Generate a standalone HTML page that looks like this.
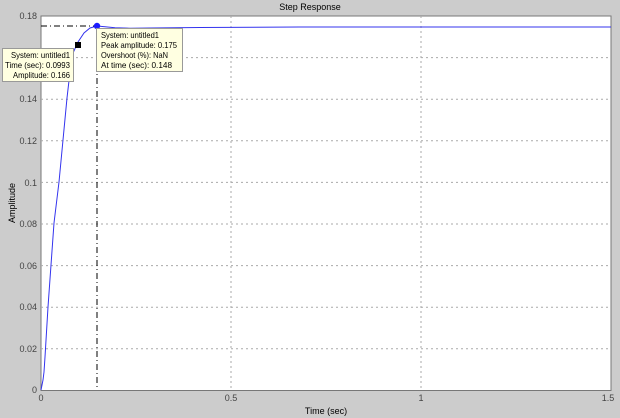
<!DOCTYPE html>
<html><head><style>
html,body{margin:0;padding:0;background:#cccccc;}
svg{display:block;font-family:"Liberation Sans",Arial,sans-serif;}
</style></head><body>
<svg width="620" height="418" viewBox="0 0 620 418" xmlns="http://www.w3.org/2000/svg">
<rect width="620" height="418" fill="#cccccc"/>
<rect x="41" y="16" width="570" height="374.5" fill="#fff" stroke="#777" stroke-width="1"/>
<g stroke="#aaa" stroke-width="1" stroke-dasharray="2,3">
<line x1="41" y1="57.6" x2="611" y2="57.6"/>
<line x1="41" y1="99.2" x2="611" y2="99.2"/>
<line x1="41" y1="140.8" x2="611" y2="140.8"/>
<line x1="41" y1="182.4" x2="611" y2="182.4"/>
<line x1="41" y1="224" x2="611" y2="224"/>
<line x1="41" y1="265.6" x2="611" y2="265.6"/>
<line x1="41" y1="307.2" x2="611" y2="307.2"/>
<line x1="41" y1="348.8" x2="611" y2="348.8"/>
<line x1="231" y1="16" x2="231" y2="390"/>
<line x1="421" y1="16" x2="421" y2="390"/>
</g>
<g stroke="#000" stroke-width="1" stroke-dasharray="6,3,1,3">
<line x1="41" y1="26" x2="97" y2="26"/>
<line x1="97" y1="26" x2="97" y2="390"/>
</g>
<polyline fill="none" stroke="#3333ee" stroke-width="1" points="41,390 43,380 44,372 45,357 48,307 51,265 54,223 59,182 63,140 67,98 70,72 73,53 78,42 84,33 90,28 97,26 105,26.8 115,27.8 130,28.2 150,28 200,27.5 300,27 611,27"/>
<circle cx="97" cy="26" r="3.2" fill="#1a1aff"/>
<rect x="75" y="42" width="6" height="6" fill="#000"/>
<g font-size="9" fill="#444" text-anchor="end">
<text x="37" y="19">0.18</text>
<text x="37" y="61">0.16</text>
<text x="37" y="102">0.14</text>
<text x="37" y="144">0.12</text>
<text x="37" y="186">0.1</text>
<text x="37" y="227">0.08</text>
<text x="37" y="269">0.06</text>
<text x="37" y="310">0.04</text>
<text x="37" y="352">0.02</text>
<text x="37" y="393">0</text>
</g>
<g font-size="9" fill="#444" text-anchor="middle">
<text x="41" y="401">0</text>
<text x="231" y="401">0.5</text>
<text x="421" y="401">1</text>
<text x="608" y="401">1.5</text>
</g>
<text x="326" y="414" font-size="9" fill="#000" text-anchor="middle">Time (sec)</text>
<text x="310" y="10" font-size="9" fill="#000" text-anchor="middle">Step Response</text>
<text transform="translate(15,203) rotate(-90)" font-size="9" fill="#000" text-anchor="middle">Amplitude</text>
<rect x="2.5" y="48.5" width="71" height="33" fill="#ffffe1" stroke="#999"/>
<g font-size="8.5" fill="#000">
<text x="11" y="58" textLength="59" lengthAdjust="spacingAndGlyphs">System: untitled1</text>
<text x="5" y="68" textLength="65" lengthAdjust="spacingAndGlyphs">Time (sec): 0.0993</text>
<text x="13" y="78" textLength="57" lengthAdjust="spacingAndGlyphs">Amplitude: 0.166</text>
</g>
<rect x="96.5" y="28.5" width="86" height="43" fill="#ffffe1" stroke="#999"/>
<g font-size="8.5" fill="#000">
<text x="101" y="38" textLength="58" lengthAdjust="spacingAndGlyphs">System: untitled1</text>
<text x="101" y="48" textLength="76" lengthAdjust="spacingAndGlyphs">Peak amplitude: 0.175</text>
<text x="101" y="58" textLength="67" lengthAdjust="spacingAndGlyphs">Overshoot (%): NaN</text>
<text x="101" y="68" textLength="71" lengthAdjust="spacingAndGlyphs">At time (sec): 0.148</text>
</g>
</svg>
</body></html>
